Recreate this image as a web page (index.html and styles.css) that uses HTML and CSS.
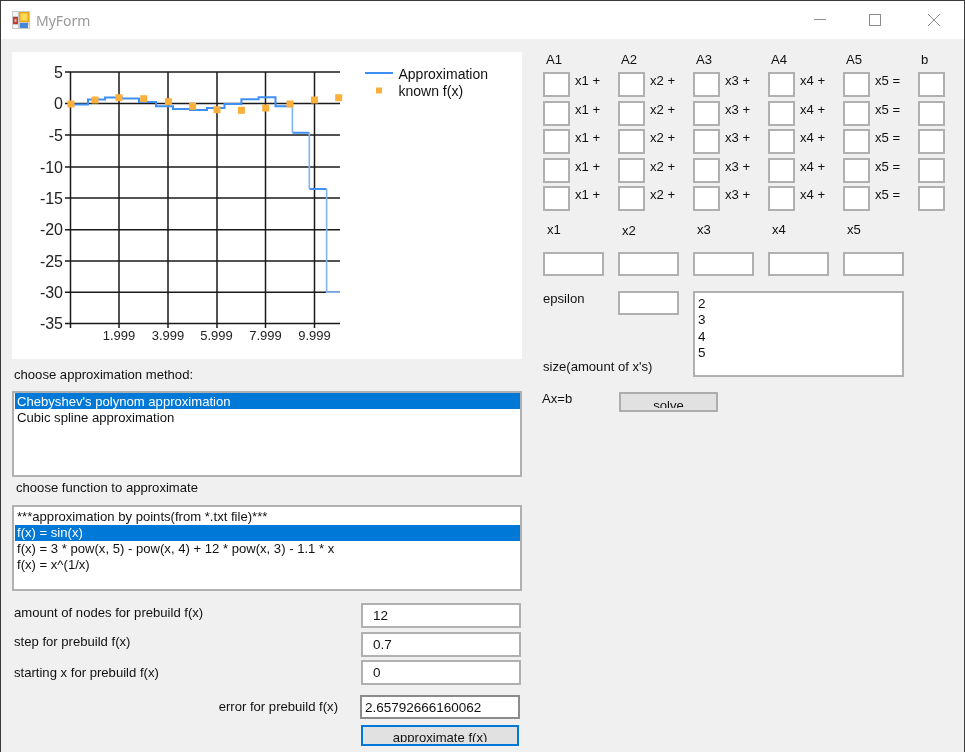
FILE: index.html
```html
<!DOCTYPE html>
<html>
	<head>
		<meta charset="UTF-8">
		<title>MyForm</title>
		<link rel="stylesheet" href="styles.css">
	</head>
	<body>
		<div class="window">
			<div class="titlebar">
				<svg class="app-icon" width="18" height="18" viewBox="0 0 18 18">
					<rect width="18" height="18" fill="#c9c9c9"/>
					<rect x="1" y="1" width="5" height="4" fill="#f4f4f4"/>
					<rect x="1" y="14" width="5" height="3" fill="#f4f4f4"/>
					<rect x="12" y="14" width="5" height="3" fill="#f4f4f4"/>
					<rect x="1" y="6" width="5" height="7" fill="#c23a32"/>
					<rect x="2.5" y="8" width="2" height="3" fill="#f0b0a0"/>
					<rect x="7" y="1" width="10" height="10" fill="#e8a914"/>
					<rect x="8.5" y="2.5" width="7" height="7" fill="#fbd75a"/>
					<rect x="8" y="12" width="8" height="5" fill="#4a86d8"/>
				</svg>
				<span class="title">MyForm</span>
				<svg class="win-btn" width="12" height="12" viewBox="0 0 12 12"><path d="M0 5.5H12" stroke="#8c8c8c" fill="none"/></svg>
				<svg class="win-btn win-max" width="12" height="12" viewBox="0 0 12 12"><rect x="0.5" y="0.5" width="11" height="11" stroke="#8c8c8c" fill="none"/></svg>
				<svg class="win-btn win-close" width="12" height="12" viewBox="0 0 12 12"><path d="M0 0L12 12M12 0L0 12" stroke="#8c8c8c" fill="none"/></svg>
			</div>
			<div class="client">
				<div class="left">
					<svg class="chart" width="510" height="307" viewBox="12 52 510 307">
						<g class="grid">
							<path d="M65 72H340M65 103.5H340M65 135H340M65 167H340M65 198H340M65 229.7H340M65 261H340M65 292.3H340M65 323.5H340"/>
							<path d="M70.5 72V328M119 72V328M168 72V328M217 72V328M265.5 72V328M314.5 72V328"/>
						</g>
						<path class="series" d="M70 104.5H88V99.5H105V97.5H122V98.5H139V102H156V106.3H173V109H190V110H207V108H224.5V104H241.4V99.3H258.6V97.3H275.5V106.3H292.4M292.4 132.7H309.3M309.3 189H326.6"/>
						<path class="series-thin" d="M292.4 106.3V132.7M309.3 132.7V189M326.6 189V292.3H340"/>
						<g class="points">
							<rect x="67.5" y="100.5" width="7" height="7"/>
							<rect x="91.5" y="96.5" width="7" height="7"/>
							<rect x="115.5" y="94.2" width="7" height="7"/>
							<rect x="140.2" y="95.2" width="7" height="7"/>
							<rect x="164.9" y="98.2" width="7" height="7"/>
							<rect x="189.2" y="102.8" width="7" height="7"/>
							<rect x="213.5" y="106.2" width="7" height="7"/>
							<rect x="237.9" y="106.8" width="7" height="7"/>
							<rect x="262.2" y="104.5" width="7" height="7"/>
							<rect x="286.5" y="100.5" width="7" height="7"/>
							<rect x="310.9" y="96.5" width="7" height="7"/>
							<rect x="335.2" y="94.2" width="7" height="7"/>
						</g>
						<g class="y-labels">
							<text x="63" y="77.5">5</text>
							<text x="63" y="109">0</text>
							<text x="63" y="140.5">-5</text>
							<text x="63" y="172.5">-10</text>
							<text x="63" y="203.5">-15</text>
							<text x="63" y="235">-20</text>
							<text x="63" y="266.5">-25</text>
							<text x="63" y="297.5">-30</text>
							<text x="63" y="329">-35</text>
						</g>
						<g class="x-labels">
							<text x="119" y="340">1.999</text>
							<text x="168" y="340">3.999</text>
							<text x="216.5" y="340">5.999</text>
							<text x="265.5" y="340">7.999</text>
							<text x="314.5" y="340">9.999</text>
						</g>
						<path class="series" d="M365 73H393"/>
						<rect class="legend-dot" x="376" y="87.5" width="6" height="6"/>
						<text class="legend" x="398.5" y="79">Approximation</text>
						<text class="legend" x="398.5" y="96">known f(x)</text>
					</svg>

					<div class="label method-label">choose approximation method:</div>
					<ul class="listbox method-list">
						<li class="selected">Chebyshev's polynom approximation</li>
						<li>Cubic spline approximation</li>
					</ul>

					<div class="label func-label">choose function to approximate</div>
					<ul class="listbox func-list">
						<li>***approximation by points(from *.txt file)***</li>
						<li class="selected">f(x) = sin(x)</li>
						<li>f(x) = 3 * pow(x, 5) - pow(x, 4) + 12 * pow(x, 3) - 1.1 * x</li>
						<li>f(x) = x^(1/x)</li>
					</ul>

					<div class="param nodes-row">
						<div class="label raised">amount of nodes for prebuild f(x)</div>
						<input class="box param-input" type="text" value="12">
					</div>
					<div class="param step-row">
						<div class="label raised">step for prebuild f(x)</div>
						<input class="box param-input" type="text" value="0.7">
					</div>
					<div class="param start-row">
						<div class="label">starting x for prebuild f(x)</div>
						<input class="box param-input" type="text" value="0">
					</div>
					<div class="param error-row">
						<div class="label">error for prebuild f(x)</div>
						<input class="box error-input" type="text" value="2.65792666160062">
					</div>
					<button class="btn approx-btn"><span>approximate f(x)</span></button>
				</div>

				<div class="right">
					<div class="columns heads">
						<div>A1</div><div>A2</div><div>A3</div><div>A4</div><div>A5</div><div>b</div>
					</div>
					<div class="columns equations">
						<div class="cell"><input class="box small"><span>x1 +</span></div>
						<div class="cell"><input class="box small"><span>x2 +</span></div>
						<div class="cell"><input class="box small"><span>x3 +</span></div>
						<div class="cell"><input class="box small"><span>x4 +</span></div>
						<div class="cell"><input class="box small"><span>x5 =</span></div>
						<div class="cell"><input class="box small"></div>

						<div class="cell"><input class="box small"><span>x1 +</span></div>
						<div class="cell"><input class="box small"><span>x2 +</span></div>
						<div class="cell"><input class="box small"><span>x3 +</span></div>
						<div class="cell"><input class="box small"><span>x4 +</span></div>
						<div class="cell"><input class="box small"><span>x5 =</span></div>
						<div class="cell"><input class="box small"></div>

						<div class="cell"><input class="box small"><span>x1 +</span></div>
						<div class="cell"><input class="box small"><span>x2 +</span></div>
						<div class="cell"><input class="box small"><span>x3 +</span></div>
						<div class="cell"><input class="box small"><span>x4 +</span></div>
						<div class="cell"><input class="box small"><span>x5 =</span></div>
						<div class="cell"><input class="box small"></div>

						<div class="cell"><input class="box small"><span>x1 +</span></div>
						<div class="cell"><input class="box small"><span>x2 +</span></div>
						<div class="cell"><input class="box small"><span>x3 +</span></div>
						<div class="cell"><input class="box small"><span>x4 +</span></div>
						<div class="cell"><input class="box small"><span>x5 =</span></div>
						<div class="cell"><input class="box small"></div>

						<div class="cell"><input class="box small"><span>x1 +</span></div>
						<div class="cell"><input class="box small"><span>x2 +</span></div>
						<div class="cell"><input class="box small"><span>x3 +</span></div>
						<div class="cell"><input class="box small"><span>x4 +</span></div>
						<div class="cell"><input class="box small"><span>x5 =</span></div>
						<div class="cell"><input class="box small"></div>
					</div>
					<div class="columns x-heads">
						<div>x1</div><div class="low">x2</div><div>x3</div><div>x4</div><div>x5</div>
					</div>
					<div class="columns x-inputs">
						<input class="box wide"><input class="box wide"><input class="box wide"><input class="box wide"><input class="box wide">
					</div>
					<div class="size-block">
						<div class="size-labels">
							<div class="label">epsilon</div>
							<div class="label">size(amount of x's)</div>
						</div>
						<input class="box wide">
						<ul class="listbox size-list">
							<li>2</li>
							<li>3</li>
							<li>4</li>
							<li>5</li>
						</ul>
					</div>
					<div class="solve-row">
						<div class="label">Ax=b</div>
						<button class="btn solve-btn"><span>solve</span></button>
					</div>
				</div>
			</div>
		</div>
	</body>
</html>
```

FILE: styles.css
```css
*{
	margin: 0;
	padding: 0;
	box-sizing: border-box;
}
body{
	background: #f0f0f0;
	font-family: "Liberation Sans", Arial, sans-serif;
	font-size: 13.1px;
	color: #111;
}
.window{
	width: 965px;
	height: 752px;
	overflow: hidden;
	background: #f0f0f0;
	border-top: 1px solid #3a3a3a;
	border-left: 1px solid #3a3a3a;
	border-right: 1px solid #3a3a3a;
	filter: blur(0.35px);
}

/* title bar */
.titlebar{
	height: 38px;
	background: #fff;
	display: flex;
	align-items: center;
	padding-left: 11px;
}
.app-icon{
	margin-right: 6px;
}
.title{
	font-family: "Noto Sans", sans-serif;
	font-size: 14px;
	color: #999;
	flex: 1;
}
.win-btn{
	margin-right: 43px;
}
.win-max{
	margin-right: 47px;
}
.win-close{
	margin-right: 24px;
}

/* main area */
.client{
	display: flex;
	padding: 13px 0 0 11px;
}
.left{
	width: 510px;
}
.right{
	margin-left: 21px;
}
.label{
	height: 16px;
	line-height: 16px;
	white-space: nowrap;
}

/* chart */
.chart{
	display: block;
	background: #fff;
}
.grid path{
	stroke: #1a1a1a;
	stroke-width: 1.5;
	fill: none;
}
.series{
	stroke: #3f8ff5;
	stroke-width: 2;
	fill: none;
}
.series-thin{
	stroke: #7fb4f8;
	stroke-width: 1.6;
	fill: none;
}
.points rect, .legend-dot{
	fill: #fbb03b;
}
.y-labels text{
	font-size: 16px;
	text-anchor: end;
	fill: #222;
}
.x-labels text{
	font-size: 13px;
	text-anchor: middle;
	fill: #222;
}
.legend{
	font-size: 14px;
	fill: #111;
}

/* list boxes */
.listbox{
	height: 86px;
	list-style: none;
	background: #fff;
	border: 2px solid #b0b0b0;
	padding: 1px 0 1px 1px;
	line-height: 16.3px;
}
.listbox li{
	padding-left: 2px;
	height: 16.3px;
	white-space: nowrap;
}
.listbox .selected{
	background: #0078d7;
	color: #fff;
}
.method-label{
	margin: 8px 0 0 2px;
}
.method-list{
	margin-top: 8px;
	padding-top: 0;
	line-height: 17px;
}
.func-label{
	margin: 3px 0 0 4px;
}
.func-list{
	margin-top: 9px;
	padding-top: 1.5px;
}
.size-list{
	width: 211px;
	margin-left: 14px;
	padding: 3px 1px;
	font-size: 13.5px;
}

/* text boxes */
.box{
	display: block;
	height: 25px;
	background: #fff;
	border: 2px solid #b0b0b0;
	font-family: "Liberation Sans", Arial, sans-serif;
	font-size: 13.5px;
	color: #111;
	outline: none;
}
.small{
	width: 27px;
}
.wide{
	width: 61px;
	height: 24px;
}

/* parameter rows */
.param{
	display: flex;
	justify-content: space-between;
	align-items: center;
	padding: 0 1px 0 2px;
}
.param-input{
	width: 160px;
	padding-left: 10px;
}
.raised{
	margin-bottom: 6px;
}
.nodes-row{
	margin-top: 12px;
}
.step-row{
	margin-top: 4px;
}
.start-row{
	margin-top: 3px;
}
.error-row{
	margin-top: 10px;
	justify-content: flex-end;
	gap: 22px;
	padding-right: 2px;
}
.error-input{
	width: 160px;
	height: 24px;
	padding-left: 3px;
	border-color: #8c8c8c;
}

/* buttons: the caption is cut off at the bottom, as in the form */
.btn{
	display: block;
	background: #e1e1e1;
	border: 2px solid #adadad;
	font-family: "Liberation Sans", Arial, sans-serif;
	font-size: 13.1px;
	color: #111;
	overflow: hidden;
}
.btn span{
	display: block;
	line-height: 16px;
	overflow: hidden;
}
.approx-btn{
	width: 158px;
	height: 21px;
	margin: 6px 0 0 349px;
	border-color: #0078d7;
}
.approx-btn span{
	height: 12px;
}
.solve-btn{
	width: 99px;
	height: 20px;
	padding-top: 2px;
}
.solve-btn span{
	height: 10px;
}

/* equations */
.columns{
	display: grid;
	grid-template-columns: repeat(6, 75px);
}
.heads{
	height: 20px;
	line-height: 16px;
	padding-left: 3px;
}
.equations{
	grid-auto-rows: 28.5px;
}
.cell{
	display: flex;
	gap: 5px;
}
.cell span{
	line-height: 18px;
}
.x-heads{
	height: 16px;
	line-height: 16px;
	margin-top: 7px;
	padding-left: 4px;
}
.low{
	padding-top: 1px;
}
.x-inputs{
	margin-top: 14.5px;
}
.size-block{
	display: flex;
	height: 86px;
	margin-top: 15px;
}
.size-labels{
	width: 75px;
	display: flex;
	flex-direction: column;
	justify-content: space-between;
	padding-bottom: 2px;
}
.solve-row{
	display: flex;
	margin-top: 15px;
}
.solve-row .label{
	width: 77px;
	margin: -1px 0 0 -1px;
}
```
